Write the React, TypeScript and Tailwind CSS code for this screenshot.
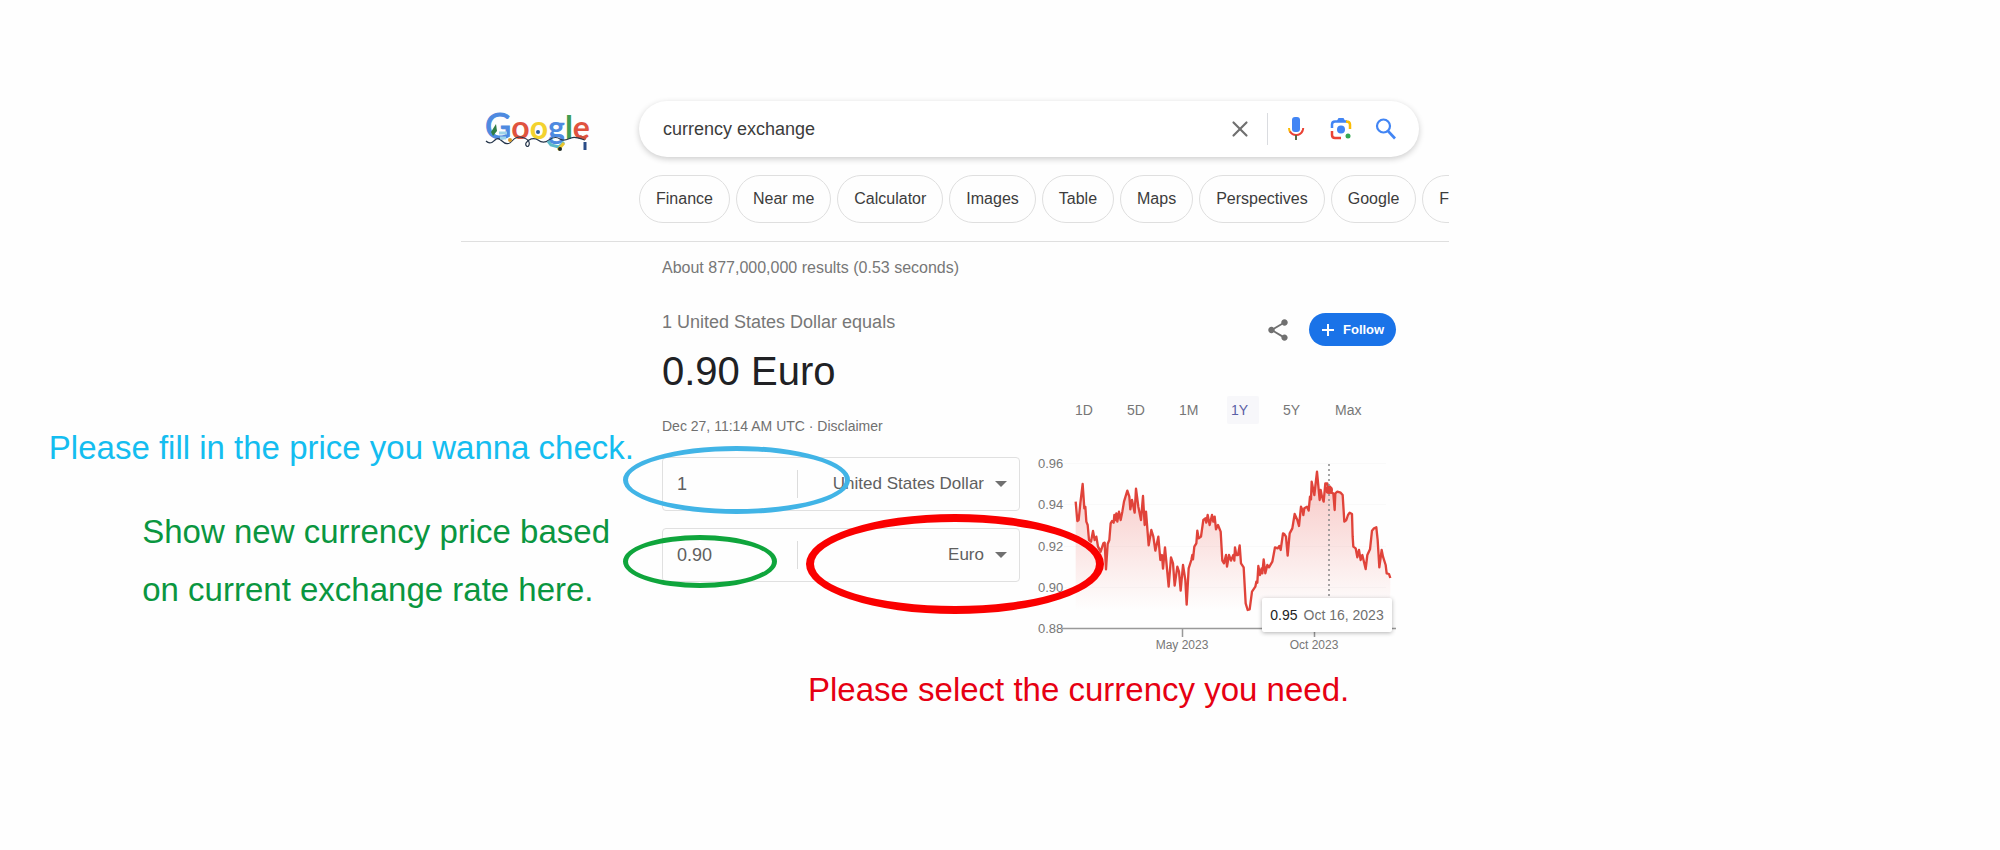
import { useState } from "react";
import { X } from "lucide-react";
import { MdShare } from "react-icons/md";

const CHIPS = ["Finance", "Near me", "Calculator", "Images", "Table", "Maps", "Perspectives", "Google", "Feedback"];
const RANGES = ["1D", "5D", "1M", "1Y", "5Y", "Max"];
const CURRENCIES = ["United States Dollar", "Euro", "Pound sterling", "Japanese Yen"];

// y positions of the grid labels inside the chart
const Y_TICKS = [
  { label: "0.96", y: 23 },
  { label: "0.94", y: 64 },
  { label: "0.92", y: 106 },
  { label: "0.90", y: 147 },
  { label: "0.88", y: 188 },
];

// USD/EUR over one year, three units per pixel
const LINE =
  "119,185 124,243 128,240 133,190 140,132 145,205 148,200 151,245 155,255 159,300 165,305 171,273 176,300 181,290 186,320 194,335 202,310 206,308 210,388 215,312 220,300 224,250 228,243 233,248 235,225 239,240 241,220 244,245 249,215 254,240 259,215 264,185 274,152 280,170 283,208 288,180 296,218 300,146 307,200 315,240 321,168 326,255 330,215 338,316 346,270 352,290 358,332 367,290 373,360 378,345 381,386 387,322 398,440 405,352 411,370 416,437 424,380 429,395 434,452 441,375 448,420 452,494 458,385 466,360 469,345 471,358 475,320 481,310 484,272 488,295 495,290 502,240 508,235 511,248 515,225 521,255 528,225 532,245 536,230 540,268 546,255 554,275 559,362 564,370 570,345 573,380 579,345 585,362 592,345 595,362 597,322 601,345 606,345 611,316 615,370 623,382 629,490 635,510 641,508 648,455 658,440 661,425 664,428 667,378 672,405 677,385 679,400 683,358 688,400 694,375 699,382 709,365 717,322 725,325 730,318 734,330 741,280 745,282 750,290 755,347 761,280 769,265 776,222 784,240 789,258 795,200 800,212 802,225 805,205 813,200 818,212 822,170 825,178 827,125 835,165 843,95 851,180 854,150 858,170 863,185 868,130 874,130 878,155 882,140 886,158 892,160 896,210 898,160 904,155 914,158 920,165 925,245 931,240 936,225 941,218 948,222 950,290 952,320 959,325 964,352 969,330 974,360 979,345 989,387 994,345 1002,328 1008,272 1014,265 1021,262 1025,300 1030,382 1037,330 1041,350 1049,375 1052,400 1059,402 1063,414";

function Logo() {
  return (
    <svg width="112" height="48" viewBox="0 0 112 48" role="img" aria-label="Google" className="overflow-visible">
      <text x="0" y="34" fontSize="32" fontWeight="700" className="font-['Lato',sans-serif]">
        <tspan fill="#4e8ae0" stroke="#4e8ae0" fontSize="36" fontWeight="400">
          G
        </tspan>
        <tspan fill="#e0533f">o</tspan>
        <tspan fill="#f3d22e">o</tspan>
        <tspan fill="#4e8ae0">g</tspan>
        <tspan fill="#3f9d52">l</tspan>
        <tspan fill="#e0533f">e</tspan>
      </text>
      <path
        d="M1 36c4 4 7 1 9-1s4-2 7 1 7 4 10 0 8-5 12-3c4 1 6 4 5 7s-4 1-3-2c2-4 8-6 12-3s7 3 11 0 8-3 11-1 7 1 11-1 8 0 14 2"
        fill="none"
        stroke="#25354a"
        strokeWidth="1.200"
      />
      <path d="M6 27l5-8 1 7-4 5z" fill="#2f7d45" />
      <path d="M14 28h8M15 33h6" stroke="#9dd3ea" strokeWidth="3" />
      <circle cx="25" cy="35" r="2" fill="#d99a24" />
      <circle cx="53" cy="27" r="2" fill="#2c5d9b" />
      <path d="M63 36l3 4 8 2 5-5" fill="none" stroke="#5bb9c9" strokeWidth="3" />
      <path d="M73 45l6-7" stroke="#eac52d" strokeWidth="3" />
      <circle cx="75" cy="44" r="2" fill="#1e2b26" />
      <path d="M95 31l6 3" stroke="#c9503a" strokeWidth="2" />
      <path d="M100 37v8" stroke="#294b86" strokeWidth="3" />
    </svg>
  );
}

function MicIcon() {
  return (
    <svg width="24" height="26" viewBox="0 0 24 26" fill="none">
      <rect x="8" y="1" width="8" height="15" rx="3" fill="#4285f4" />
      <path d="M5 12c0 2 .5 3.200 1.500 4.500" stroke="#fbbc04" strokeWidth="2" />
      <path d="M6 15.500C9 20.500 16 20 18.500 15" stroke="#ea4335" strokeWidth="2" />
      <path d="M18 16c.8-1.200 1.200-2.500 1.200-4" stroke="#ea4335" strokeWidth="2" />
      <path d="M12 19v5" stroke="#5a6b45" strokeWidth="2" />
    </svg>
  );
}

function LensIcon() {
  return (
    <svg width="24" height="26" viewBox="0 0 24 26" fill="none" strokeWidth="2.500">
      <path d="M3 12V8.500C3 6.500 4 5.500 6 5.500h12" stroke="#4285f4" />
      <path d="M7.500 5.500L9.500 2h5l2 3.500z" fill="#4285f4" />
      <path d="M17 5.500c3 0 4 1 4 3V13" stroke="#fbbc04" />
      <path d="M3 15v4c0 2 1 3 3 3h6" stroke="#ea4335" />
      <circle cx="12" cy="13.500" r="4" fill="#4285f4" />
      <circle cx="19" cy="20" r="2.500" fill="#34a853" />
    </svg>
  );
}

function SearchIcon() {
  return (
    <svg width="22" height="24" viewBox="0 0 22 24" fill="none" stroke="#4285f4">
      <circle cx="8.500" cy="9" r="6.500" strokeWidth="2.200" />
      <path d="M13 14l7 7.500" strokeWidth="2.600" />
    </svg>
  );
}

function Field({ name, value, currency }: { name: string; value: string; currency: string }) {
  return (
    <div className="relative flex h-[54px] items-center rounded border border-[#e0e0e0] text-[#606060]">
      <input
        aria-label={`${name} amount`}
        defaultValue={value}
        className="w-[135px] border-r border-[#dcdcdc] bg-transparent pl-[14px] text-[18px] leading-7 outline-none"
      />
      <select
        aria-label={`${name} currency`}
        defaultValue={currency}
        className="h-full min-w-0 flex-1 appearance-none bg-transparent pr-[35px] text-[17px] outline-none [text-align-last:right]"
      >
        {CURRENCIES.map((c) => (
          <option key={c}>{c}</option>
        ))}
      </select>
      <svg width="12" height="6" viewBox="0 0 12 6" className="pointer-events-none absolute right-3">
        <path d="M0 0h12L6 6z" fill="#707070" />
      </svg>
    </div>
  );
}

function Chart() {
  return (
    <div className="relative w-[360px]">
      <svg width="360" height="220" viewBox="0 0 360 220" className="block font-['Liberation_Sans',sans-serif]">
        <defs>
          <linearGradient id="area" x1="0" y1="95" x2="0" y2="510" gradientUnits="userSpaceOnUse">
            <stop offset="0" stopColor="#e8453c" stopOpacity="0.3" />
            <stop offset="1" stopColor="#e8453c" stopOpacity="0" />
          </linearGradient>
        </defs>
        {Y_TICKS.map((t) => (
          <g key={t.label}>
            <text x="2" y={t.y + 5} fontSize="13" fill="#777">
              {t.label}
            </text>
            <path d={`M28 ${t.y}.500H350`} stroke="#f9f9f9" />
          </g>
        ))}
        <g transform="scale(0.33333)">
          <polygon points={`119,567 ${LINE} 1063,567`} fill="url(#area)" />
          <polyline points={LINE} fill="none" stroke="#e0433a" strokeWidth="7" strokeLinejoin="round" />
        </g>
        <path d="M26 188.500H360M146.500 189v8M278.500 189v8" stroke="#999" strokeWidth="1.500" fill="none" />
        <text x="146" y="209" fontSize="12" fill="#777" textAnchor="middle">
          May 2023
        </text>
        <text x="278" y="209" fontSize="12" fill="#777" textAnchor="middle">
          Oct 2023
        </text>
        <path d="M293 24v136" stroke="#888" strokeWidth="1.500" strokeDasharray="2 3" />
        <circle cx="293" cy="50" r="4" fill="#e0433a" />
      </svg>
      <div className="absolute right-1 bottom-[28px] flex h-[34px] w-[130px] items-center justify-center gap-[6px] rounded-xs bg-white text-[14px] whitespace-nowrap shadow-[0_1px_4px_rgba(0,0,0,0.3)]">
        <span className="text-[#222]">0.95</span>
        <span className="text-[#707070]">Oct 16, 2023</span>
      </div>
    </div>
  );
}

export default function App() {
  const [query, setQuery] = useState("currency exchange");
  const [range, setRange] = useState("1Y");

  return (
    <div className="min-h-screen overflow-hidden bg-[#fefefe] font-['Liberation_Sans',Arial,sans-serif]">
      <div className="ml-[461px] max-w-[988px]">
        <header className="border-b border-[#dfdfdf] pt-[101px] pb-[18px]">
          <div className="flex">
            <a href="#" className="w-[178px] shrink-0 pt-1 pl-6">
              <Logo />
            </a>
            <form
              onSubmit={(e) => e.preventDefault()}
              className="mr-[30px] flex h-[56px] min-w-0 flex-1 items-center rounded-full bg-white pr-[22px] pl-6 shadow-[0_2px_6px_rgba(0,0,0,0.2)]"
            >
              <input
                aria-label="Search"
                value={query}
                onChange={(e) => setQuery(e.target.value)}
                className="min-w-0 flex-1 text-[18px] text-[#3c3c3c] outline-none"
              />
              <button type="button" aria-label="Clear" onClick={() => setQuery("")} className="mr-[14px]">
                <X size={26} strokeWidth={2} color="#707070" />
              </button>
              <span className="h-8 w-px bg-[#dadce0]" />
              <button type="button" aria-label="Search by voice" className="ml-4">
                <MicIcon />
              </button>
              <button type="button" aria-label="Search by image" className="ml-[21px]">
                <LensIcon />
              </button>
              <button type="submit" aria-label="Search" className="ml-[22px]">
                <SearchIcon />
              </button>
            </form>
          </div>
          <nav className="mt-[18px] ml-[178px] flex gap-[6px] overflow-hidden">
            {CHIPS.map((c) => (
              <a
                key={c}
                href="#"
                className="flex h-[48px] shrink-0 items-center rounded-full border border-[#dfdfdf] px-4 text-[16px] text-[#3c3c3c]"
              >
                {c}
              </a>
            ))}
          </nav>
        </header>

        <main className="pl-[201px]">
          <p className="mt-4 text-[16px] leading-5 text-[#777]">About 877,000,000 results (0.53 seconds)</p>

          <div className="mt-8 flex gap-4">
            <section className="w-[358px] shrink-0">
              <h2 className="text-[18px] leading-6 text-[#777]">1 United States Dollar equals</h2>
              <p className="mt-3 text-[40px] leading-[50px] text-[#202124]">0.90 Euro</p>
              <p className="mt-5 text-[14px] leading-5 text-[#707070]">
                Dec 27, 11:14 AM UTC · <a href="#">Disclaimer</a>
              </p>
              <div className="mt-[21px] flex flex-col gap-[17px]">
                <div className="relative">
                  <Field name="From" value="1" currency="United States Dollar" />
                  <div className="pointer-events-none absolute -top-[11px] -left-[39px] h-[68px] w-[227px] rounded-[50%] border-[5px] border-[#41b4e6]" />
                  <p className="absolute -top-[29px] right-[386px] text-[33px] leading-10 whitespace-nowrap text-[#14bdf0]">
                    Please fill in the price you wanna check.
                  </p>
                </div>
                <div className="relative">
                  <Field name="To" value="0.90" currency="Euro" />
                  <div className="pointer-events-none absolute top-[7px] -left-[39px] h-[53px] w-[154px] rounded-[50%] border-[5px] border-[#0fa53c]" />
                  <div className="pointer-events-none absolute -top-[14px] left-[144px] z-10 h-[100px] w-[298px] rounded-[50%] border-[8px] border-[#fa0000]" />
                  <p className="absolute -top-[25px] right-[410px] text-[33px] leading-[58px] whitespace-nowrap text-[#0a9640]">
                    Show new currency price based
                    <br />
                    on current exchange rate here.
                  </p>
                </div>
              </div>
            </section>

            <section>
              <div className="mt-[3px] flex items-center justify-end gap-[18px]">
                <button aria-label="Share">
                  <MdShare size={26} color="#707070" />
                </button>
                <button className="flex h-[33px] w-[87px] items-center gap-[9px] rounded-full bg-[#1a73e8] pl-[13px] text-[13px] font-bold text-white">
                  <svg width="12" height="12" viewBox="0 0 12 12">
                    <path d="M6 0v12M0 6h12" stroke="#fff" strokeWidth="2" />
                  </svg>
                  Follow
                </button>
              </div>
              <div className="mt-[50px] mb-4 ml-[35px] flex gap-5">
                {RANGES.map((r) => (
                  <button
                    key={r}
                    onClick={() => setRange(r)}
                    className={`h-7 w-8 rounded-xs pl-1 text-left text-[14px] ${
                      r === range ? "bg-[#f7f7fa] text-[#5a5fa5]" : "text-[#777]"
                    }`}
                  >
                    {r}
                  </button>
                ))}
              </div>
              <Chart />
            </section>
          </div>

          <p className="mt-[10px] pl-[146px] text-[33px] leading-10 whitespace-nowrap text-[#e60012]">
            Please select the currency you need.
          </p>
        </main>
      </div>
    </div>
  );
}
